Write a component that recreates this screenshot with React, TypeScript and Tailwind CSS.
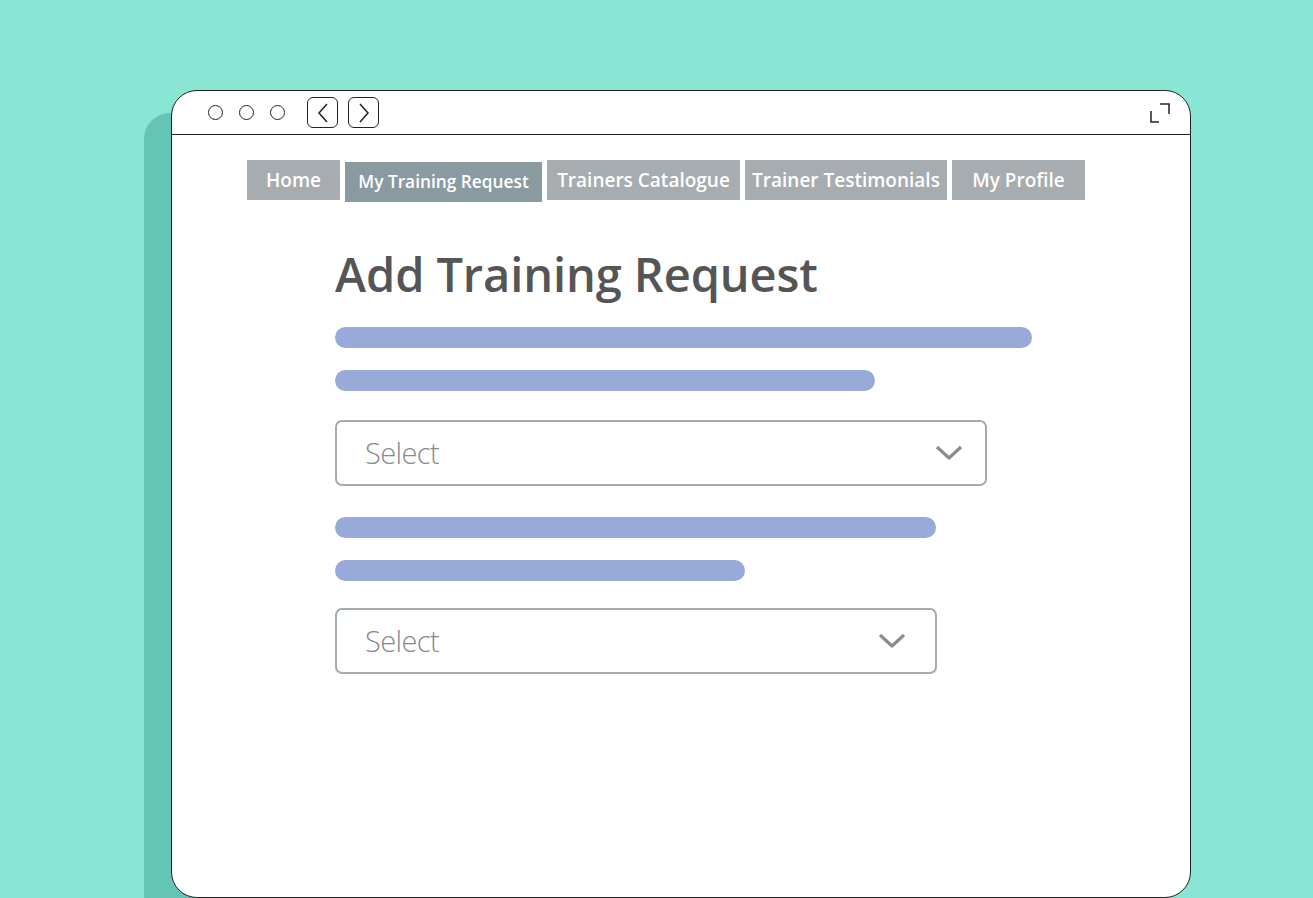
import React from 'react';

const tabs = [
  { label: 'Home', w: 'w-[93px]' },
  { label: 'My Training Request', w: 'w-[197px]', active: true },
  { label: 'Trainers Catalogue', w: 'w-[193px]' },
  { label: 'Trainer Testimonials', w: 'w-[202px]' },
  { label: 'My Profile', w: 'w-[133px]' },
];

function Chevron() {
  return (
    <svg width="28" height="16" viewBox="0 0 28 16" fill="none">
      <path d="M2 2 L14 13 L26 2" stroke="#8c8c8c" strokeWidth="3.2" strokeLinejoin="round" />
    </svg>
  );
}

function SelectBox({ width, pr }: { width: string; pr: string }) {
  return (
    <div className={`${width} ${pr} h-[66px] border-2 border-[#a3abb2] rounded-[7px] flex items-center justify-between pl-[28px]`}>
      <span className="text-[29px] font-light text-[#8a8a8a] tracking-[-0.6px]">Select</span>
      <Chevron />
    </div>
  );
}

export default function App() {
  return (
    <div className="w-full h-[898px] bg-[#89e5d4] overflow-hidden pt-[90px] pl-[171px]" style={{ fontFamily: '"Open Sans", sans-serif' }}>
      <div className="w-[1020px] h-[808px] bg-white border-[1.5px] border-[#222] rounded-[26px] shadow-[-27px_23px_0_#64c6b2] flex flex-col">
        {/* browser chrome */}
        <div className="h-[44px] border-b-[1.5px] border-[#222] flex items-center pl-[36px] pr-[20px]">
          <div className="flex items-center gap-[16px]">
            <span className="w-[15px] h-[15px] rounded-full border-[1.5px] border-[#222]" />
            <span className="w-[15px] h-[15px] rounded-full border-[1.5px] border-[#222]" />
            <span className="w-[15px] h-[15px] rounded-full border-[1.5px] border-[#222]" />
          </div>
          <div className="flex items-center gap-[10px] ml-[22px]">
            <div className="w-[31px] h-[31px] border-[1.5px] border-[#222] rounded-[6px] flex items-center justify-center">
              <svg width="14" height="22" viewBox="0 0 14 22" fill="none"><path d="M11 2 L3 11 L11 20" stroke="#222" strokeWidth="1.5" /></svg>
            </div>
            <div className="w-[31px] h-[31px] border-[1.5px] border-[#222] rounded-[6px] flex items-center justify-center">
              <svg width="14" height="22" viewBox="0 0 14 22" fill="none"><path d="M3 2 L11 11 L3 20" stroke="#222" strokeWidth="1.5" /></svg>
            </div>
          </div>
          <svg className="ml-auto" width="20" height="20" viewBox="0 0 20 20" fill="none">
            <path d="M1 8 V19 H9" stroke="#222" strokeWidth="1.5" />
            <path d="M10 1 H19 V11" stroke="#222" strokeWidth="1.5" />
          </svg>
        </div>

        {/* nav */}
        <div className="flex items-start gap-[5px] pl-[75px] pt-[25px]">
          {tabs.map(t => (
            <div
              key={t.label}
              className={`${t.w} h-[40px] flex items-center justify-center text-white font-semibold ${
                t.active ? 'bg-[#8a9aa1] mt-[2px] text-[17.3px]' : 'bg-[#a6acaf] text-[19px]'
              }`}
            >
              {t.label}
            </div>
          ))}
        </div>

        {/* form */}
        <div className="pl-[163px] pt-[49px] flex flex-col">
          <h1 className="text-[47px] font-semibold text-[#555] leading-none tracking-[-0.1px]">Add Training Request</h1>
          <div className="mt-[29px] w-[697px] h-[21px] rounded-full bg-[#97aad8]" />
          <div className="mt-[22px] w-[540px] h-[21px] rounded-full bg-[#97aad8]" />
          <div className="mt-[29px]"><SelectBox width="w-[652px]" pr="pr-[22px]" /></div>
          <div className="mt-[31px] w-[601px] h-[21px] rounded-full bg-[#97aad8]" />
          <div className="mt-[22px] w-[410px] h-[21px] rounded-full bg-[#97aad8]" />
          <div className="mt-[27px]"><SelectBox width="w-[602px]" pr="pr-[29px]" /></div>
        </div>
      </div>
    </div>
  );
}
